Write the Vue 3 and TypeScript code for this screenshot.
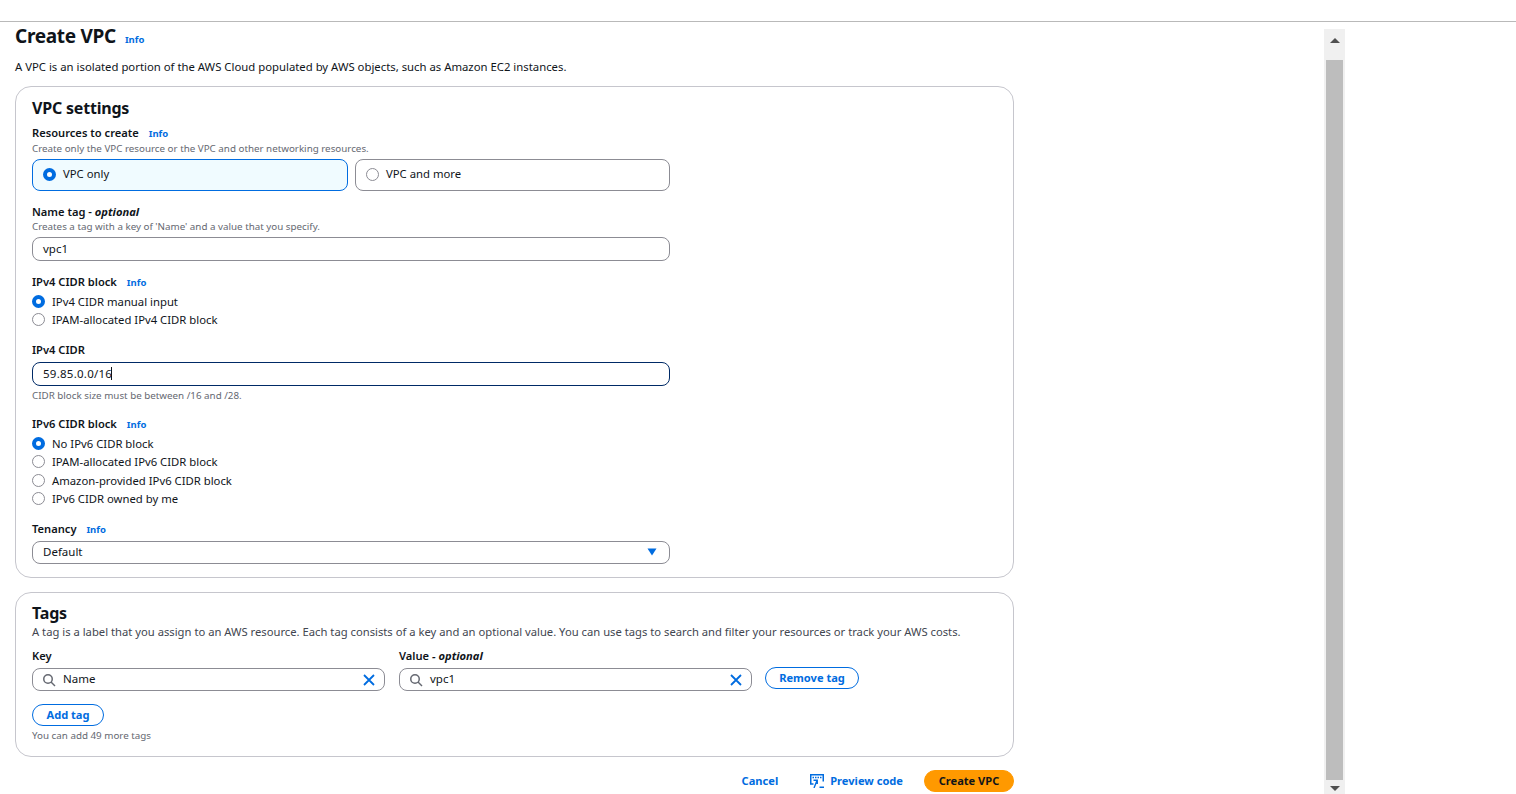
<template>
  <div class="page">
    <div class="topline"></div>
    <div class="shell">
      <main class="content">
        <header class="head">
          <h1>Create VPC</h1>
          <a class="info">Info</a>
        </header>
        <p class="intro">A VPC is an isolated portion of the AWS Cloud populated by AWS objects, such as Amazon EC2 instances.</p>

        <section class="card settings">
          <h2>VPC settings</h2>

          <div class="label first">Resources to create <a class="info">Info</a></div>
          <div class="desc">Create only the VPC resource or the VPC and other networking resources.</div>
          <div class="tiles">
            <div class="tile on"><span class="radio on"></span>VPC only</div>
            <div class="tile"><span class="radio"></span>VPC and more</div>
          </div>

          <div class="label gap-name">Name tag - <em>optional</em></div>
          <div class="desc">Creates a tag with a key of 'Name' and a value that you specify.</div>
          <div class="field name">vpc1</div>

          <div class="label gap-v4">IPv4 CIDR block <a class="info">Info</a></div>
          <div class="radios v4">
            <div v-for="r in ipv4Options" :key="r.text" class="opt"><span class="radio" :class="{ on: r.on }"></span>{{ r.text }}</div>
          </div>

          <div class="label gap-cidr">IPv4 CIDR</div>
          <div class="field focused">59.85.0.0/16<span class="caret"></span></div>
          <div class="desc hint">CIDR block size must be between /16 and /28.</div>

          <div class="label gap-v6">IPv6 CIDR block <a class="info">Info</a></div>
          <div class="radios v6">
            <div v-for="r in ipv6Options" :key="r.text" class="opt"><span class="radio" :class="{ on: r.on }"></span>{{ r.text }}</div>
          </div>

          <div class="label gap-ten">Tenancy <a class="info">Info</a></div>
          <div class="field select">
            Default
            <svg width="10" height="8" viewBox="0 0 10 8"><path d="M0.5 0.5h9L5 7.5z" fill="#006ce0" /></svg>
          </div>
        </section>

        <section class="card tags">
          <h2>Tags</h2>
          <div class="tagdesc">A tag is a label that you assign to an AWS resource. Each tag consists of a key and an optional value. You can use tags to search and filter your resources or track your AWS costs.</div>
          <div class="tagrow">
            <div v-for="t in tagFields" :key="t.label" class="tagcol">
              <div class="label">{{ t.label }}<em v-if="t.optional"> - optional</em></div>
              <div class="field auto">
                <svg class="search" width="14" height="14" viewBox="0 0 14 14" fill="none" stroke="#656871" stroke-width="1.5"><circle cx="6" cy="6" r="4.25" /><path d="M9 9l4 4" /></svg>
                <span class="autotext">{{ t.value }}</span>
                <svg width="12" height="12" viewBox="0 0 12 12" fill="none" stroke="#006ce0" stroke-width="1.8"><path d="M1 1l10 10M11 1L1 11" /></svg>
              </div>
            </div>
            <button class="btn remove">Remove tag</button>
          </div>
          <button class="btn add">Add tag</button>
          <div class="desc more">You can add 49 more tags</div>
        </section>

        <footer class="actions">
          <a class="plain">Cancel</a>
          <a class="plain preview">
            <svg width="14" height="14" viewBox="0 0 14 14" fill="none" stroke="#006ce0" stroke-width="1.5">
              <path d="M3.5 10H0.75V0.75h12.5V7.5" />
              <path d="M2.5 3.5h9" stroke-dasharray="1.5 1" />
              <path d="M3.5 5.75h3.75v3.75M7 6L4 13.5" stroke-width="1.4" transform="translate(0 0.5)" />
              <path d="M9.5 13.25H14" />
            </svg>
            Preview code
          </a>
          <button class="btn primary">Create VPC</button>
        </footer>
      </main>

      <div class="scrollbar" aria-hidden="true">
        <span class="arrow up"></span>
        <div class="thumb"></div>
        <span class="arrow down"></span>
      </div>
    </div>
  </div>
</template>

<script setup lang="ts">
interface RadioOption { text: string; on?: boolean }
interface TagField { label: string; value: string; optional?: boolean }

const ipv4Options: RadioOption[] = [
  { text: 'IPv4 CIDR manual input', on: true },
  { text: 'IPAM-allocated IPv4 CIDR block' },
];
const ipv6Options: RadioOption[] = [
  { text: 'No IPv6 CIDR block', on: true },
  { text: 'IPAM-allocated IPv6 CIDR block' },
  { text: 'Amazon-provided IPv6 CIDR block' },
  { text: 'IPv6 CIDR owned by me' },
];
const tagFields: TagField[] = [
  { label: 'Key', value: 'Name' },
  { label: 'Value', value: 'vpc1', optional: true },
];
</script>

<style>
html, body { margin: 0; background: #fff; overflow: hidden; }
</style>

<style scoped>
.page {
  width: 1516px;
  height: 794px;
  overflow: hidden;
  font-family: "Noto Sans", "Open Sans", sans-serif;
  font-size: 12px;
  color: #0f141a;
}
.topline { height: 21px; border-bottom: 1px solid #b9b9b9; }
.shell { display: flex; padding-left: 15px; }
.content { width: 999px; flex: none; }
.head { display: flex; align-items: baseline; gap: 9px; height: 35px; padding-top: 2px; }
h1 { margin: 0; font-size: 19px; line-height: 24px; font-weight: 700; letter-spacing: -0.3px; }
h2 { margin: 0; font-size: 16px; line-height: 20px; font-weight: 700; letter-spacing: -0.2px; }
.info { color: #006ce0; font-size: 9.5px; font-weight: 700; margin-left: 7px; }
.head .info { margin-left: 0; }
.intro { margin: 0; height: 27px; font-size: 11.33px; line-height: 16px; }
.card {
  border: 1px solid #c6c6cd;
  border-radius: 16px;
  padding: 11px 16px 0;
  box-sizing: border-box;
  width: 999px;
}
.settings { height: 492px; }
.tags { height: 165px; margin-top: 14px; padding-top: 10px; }
.label { font-size: 11.15px; line-height: 15px; font-weight: 600; }
.label em { font-weight: 700; }
.desc { font-size: 9.8px; line-height: 15px; color: #656871; }
.first { margin-top: 7px; }
.tiles { display: grid; grid-template-columns: 316px 315px; gap: 7px; width: 638px; margin-top: 3px; }
.tile {
  height: 32px;
  box-sizing: border-box;
  border: 1px solid #8c8c94;
  border-radius: 8px;
  display: flex;
  align-items: center;
  padding: 0 0 4px 10px;
  font-size: 11.3px;
}
.tile.on { background: #f0fbff; border-color: #006ce0; }
.tile .radio { margin: 2px 7px 0 0; }
.radio {
  width: 13px;
  height: 13px;
  box-sizing: border-box;
  border: 1.7px solid #8c8c94;
  border-radius: 50%;
  display: inline-block;
  flex: none;
  background: #fff;
}
.radio.on { border: 4px solid #006ce0; }
.field {
  width: 638px;
  height: 24px;
  box-sizing: border-box;
  border: 1px solid #8c8c94;
  border-radius: 8px;
  display: flex;
  align-items: center;
  padding: 0 0 1px 10px;
  font-size: 11.5px;
  background: #fff;
}
.field.name { margin-top: 3px; }
.field.focused { border-color: #002a66; letter-spacing: 0.25px; }
.caret { width: 1px; height: 13px; background: #0f141a; margin-left: -1px; }
.gap-name { margin-top: 13px; }
.gap-v4 { margin-top: 13px; }
.gap-cidr { margin-top: 13px; margin-bottom: 5px; }
.gap-v6 { margin-top: 13px; }
.gap-ten { margin-top: 13.3px; margin-bottom: 4px; }
.hint { margin-top: 2px; }
.radios { margin-top: 3px; }
.radios.v4 { margin-top: 2px; }
.radios.v6 { margin-top: 2.7px; }
.opt { display: flex; align-items: center; gap: 7px; height: 18.3px; font-size: 11.3px; }
.select { height: 23px; justify-content: space-between; padding-right: 12px; }
.tagdesc { font-size: 11.24px; line-height: 16px; margin-top: 1px; color: #424650; }
.tagrow { display: flex; align-items: flex-end; gap: 14px; margin-top: 8px; }
.tagcol { width: 353px; }
.tagcol .label { margin-bottom: 5px; }
.auto { width: 353px; height: 23px; padding: 0 9px 0 9px; }
.autotext { flex: 1; margin: 0 0 2px 7px; }
.btn {
  font-family: inherit;
  font-size: 11.1px;
  font-weight: 700;
  height: 22px;
  border-radius: 11px;
  border: 1px solid #006ce0;
  background: #fff;
  color: #006ce0;
  padding: 0 0 2px;
}
.remove { width: 94px; margin-bottom: 2px; margin-left: -1px; }
.add { width: 72px; display: block; margin-top: 13px; }
.more { line-height: 17px; margin-top: 1px; }
.actions { display: flex; align-items: center; justify-content: flex-end; height: 22px; margin-top: 13px; }
.plain { color: #006ce0; font-size: 11.1px; font-weight: 700; padding-bottom: 2px; }
.preview { display: flex; align-items: center; gap: 6px; margin-left: 32px; }
.preview svg { margin-top: 2px; }
.primary { width: 90px; margin-left: 21px; background: #f90; border-color: #f90; color: #0f141a; }
.scrollbar {
  width: 21px;
  height: 765px;
  margin-top: 7px;
  margin-left: 310px;
  flex: none;
  background: #f0f0f0;
  box-sizing: border-box;
  padding: 0 2px;
  display: flex;
  flex-direction: column;
  align-items: center;
}
.thumb { width: 100%; height: 720px; background: #bdbdbd; flex: none; }
.arrow { flex: none; width: 0; height: 0; border-left: 5px solid transparent; border-right: 5px solid transparent; }
.up { border-bottom: 5px solid #505050; margin: 9px 0 17px; }
.down { border-top: 5px solid #505050; margin-top: 6px; }
</style>
